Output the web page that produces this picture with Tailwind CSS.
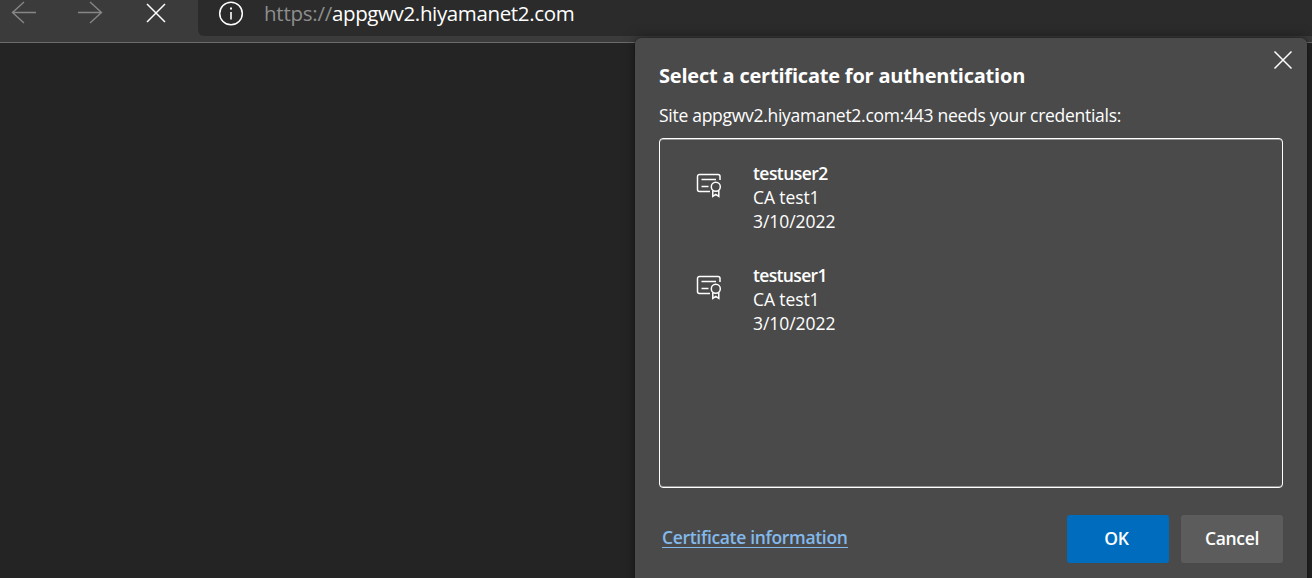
<!DOCTYPE html>
<html lang="en">
<head>
    <meta charset="UTF-8">
    <meta name="viewport" content="width=device-width, initial-scale=1.0">
    <title>appgwv2.hiyamanet2.com</title>
    <script src="https://cdn.jsdelivr.net/npm/@tailwindcss/browser@4"></script>
</head>
<body class="bg-[#242424] text-white font-['Open_Sans','Noto_Sans',sans-serif] h-[578px] overflow-hidden relative">
    <!-- Toolbar -->
    <header class="flex h-[43px] bg-[#3b3b3b] border-b border-[#6b6d6b]">
        <nav class="flex w-[198px] shrink-0">
            <svg class="w-[66px] h-[26px]" viewBox="0 0 66 26" fill="none" stroke="#868686" stroke-width="1.4"><path d="M36 12.5H12.5M24 2L12.5 12.5L24 23"/></svg>
            <svg class="w-[66px] h-[26px]" viewBox="0 0 66 26" fill="none" stroke="#868686" stroke-width="1.4"><path d="M12 12.5H35.5M24 2L35.5 12.5L24 23"/></svg>
            <svg class="w-[66px] h-[26px]" viewBox="0 0 66 26" fill="none" stroke="#fff" stroke-width="1.5"><path d="M15 4L33 22M33 4L15 22"/></svg>
        </nav>
        <!-- Address bar -->
        <div class="flex flex-1 h-9 bg-[#2b2b2b] rounded-bl-md pl-5">
            <svg class="w-[26px] h-[27px] shrink-0" viewBox="0 0 26 27" fill="none" stroke="#fff"><circle cx="13" cy="13.5" r="11.3" stroke-width="1.5"/><path d="M13 12V19.5" stroke-width="1.6"/><path d="M13 7.5V9.5" stroke-width="2"/></svg>
            <p class="ml-5 h-7 leading-[26px] text-[20.5px] tracking-[-0.36px] whitespace-nowrap"><span class="text-[#8e8e8e] tracking-[-0.25px]">https://</span><span>appgwv2.hiyamanet2.com</span></p>
        </div>
    </header>

    <!-- Certificate dialog -->
    <div class="absolute left-[635px] top-[38px] w-[672px] h-[560px] bg-[#4a4a4a] rounded-md shadow-[0_0_14px_rgba(0,0,0,0.4),0_0_2px_rgba(0,0,0,0.5)] px-6">
        <svg class="absolute right-[14px] top-[11.5px] w-5 h-5" viewBox="0 0 20 20" fill="none" stroke="#fff" stroke-width="1.5"><path d="M1.5 1.5L18.5 18.5M18.5 1.5L1.5 18.5"/></svg>
        <h1 class="pt-[23px] text-[20px] tracking-[-0.2px] leading-[30px] font-bold whitespace-nowrap">Select a certificate for authentication</h1>
        <p class="mt-[11px] text-[17.5px] tracking-[-0.28px] leading-[26px] whitespace-nowrap">Site appgwv2.hiyamanet2.com:443 needs your credentials:</p>
        <ul class="mt-[10px] h-[350px] border border-white shadow-[inset_0_1px_0_rgba(255,255,255,0.4),inset_0_-1px_0_rgba(255,255,255,0.4)] rounded pt-[22px] pl-9">
            <li class="flex h-[102px]">
                <svg class="mt-3 w-7 h-7" viewBox="0 0 28 28" fill="none" stroke="#fff" stroke-width="1.5"><path d="M14 18.5H3.5a2 2 0 0 1-2-2V3.5a2 2 0 0 1 2-2H22a2 2 0 0 1 2 2V7M5.5 6.5H20M5.5 13.5H12.5"/><circle cx="19.8" cy="13.8" r="4.5"/><path d="M16.8 17.5V23.3L19.8 21.3L22.8 23.3V17.5"/></svg>
                <div class="ml-[29px] text-[17.5px] leading-6">
                    <p class="font-semibold tracking-[-0.55px]">testuser2</p>
                    <p class="tracking-[-0.1px]">CA test1</p>
                    <p class="tracking-[-0.05px]">3/10/2022</p>
                </div>
            </li>
            <li class="flex h-[102px]">
                <svg class="mt-3 w-7 h-7" viewBox="0 0 28 28" fill="none" stroke="#fff" stroke-width="1.5"><path d="M14 18.5H3.5a2 2 0 0 1-2-2V3.5a2 2 0 0 1 2-2H22a2 2 0 0 1 2 2V7M5.5 6.5H20M5.5 13.5H12.5"/><circle cx="19.8" cy="13.8" r="4.5"/><path d="M16.8 17.5V23.3L19.8 21.3L22.8 23.3V17.5"/></svg>
                <div class="ml-[29px] text-[17.5px] leading-6">
                    <p class="font-semibold tracking-[-0.65px]">testuser1</p>
                    <p class="tracking-[-0.1px]">CA test1</p>
                    <p class="tracking-[-0.05px]">3/10/2022</p>
                </div>
            </li>
        </ul>
        <div class="mt-[27px] flex items-center gap-3 text-[17.5px] font-semibold tracking-[-0.3px]">
            <a href="#" class="ml-[3px] mr-auto mb-[3px] text-[#83b9ec] leading-[19px] tracking-[-0.33px] border-b border-[#83b9ec] whitespace-nowrap">Certificate information</a>
            <button class="w-[102px] h-12 rounded-[3px] bg-[#006cbe] pr-[3px] pb-0.5">OK</button>
            <button class="w-[102px] h-12 rounded-[3px] bg-[#5c5c5c] pb-0.5">Cancel</button>
        </div>
    </div>
</body>
</html>
